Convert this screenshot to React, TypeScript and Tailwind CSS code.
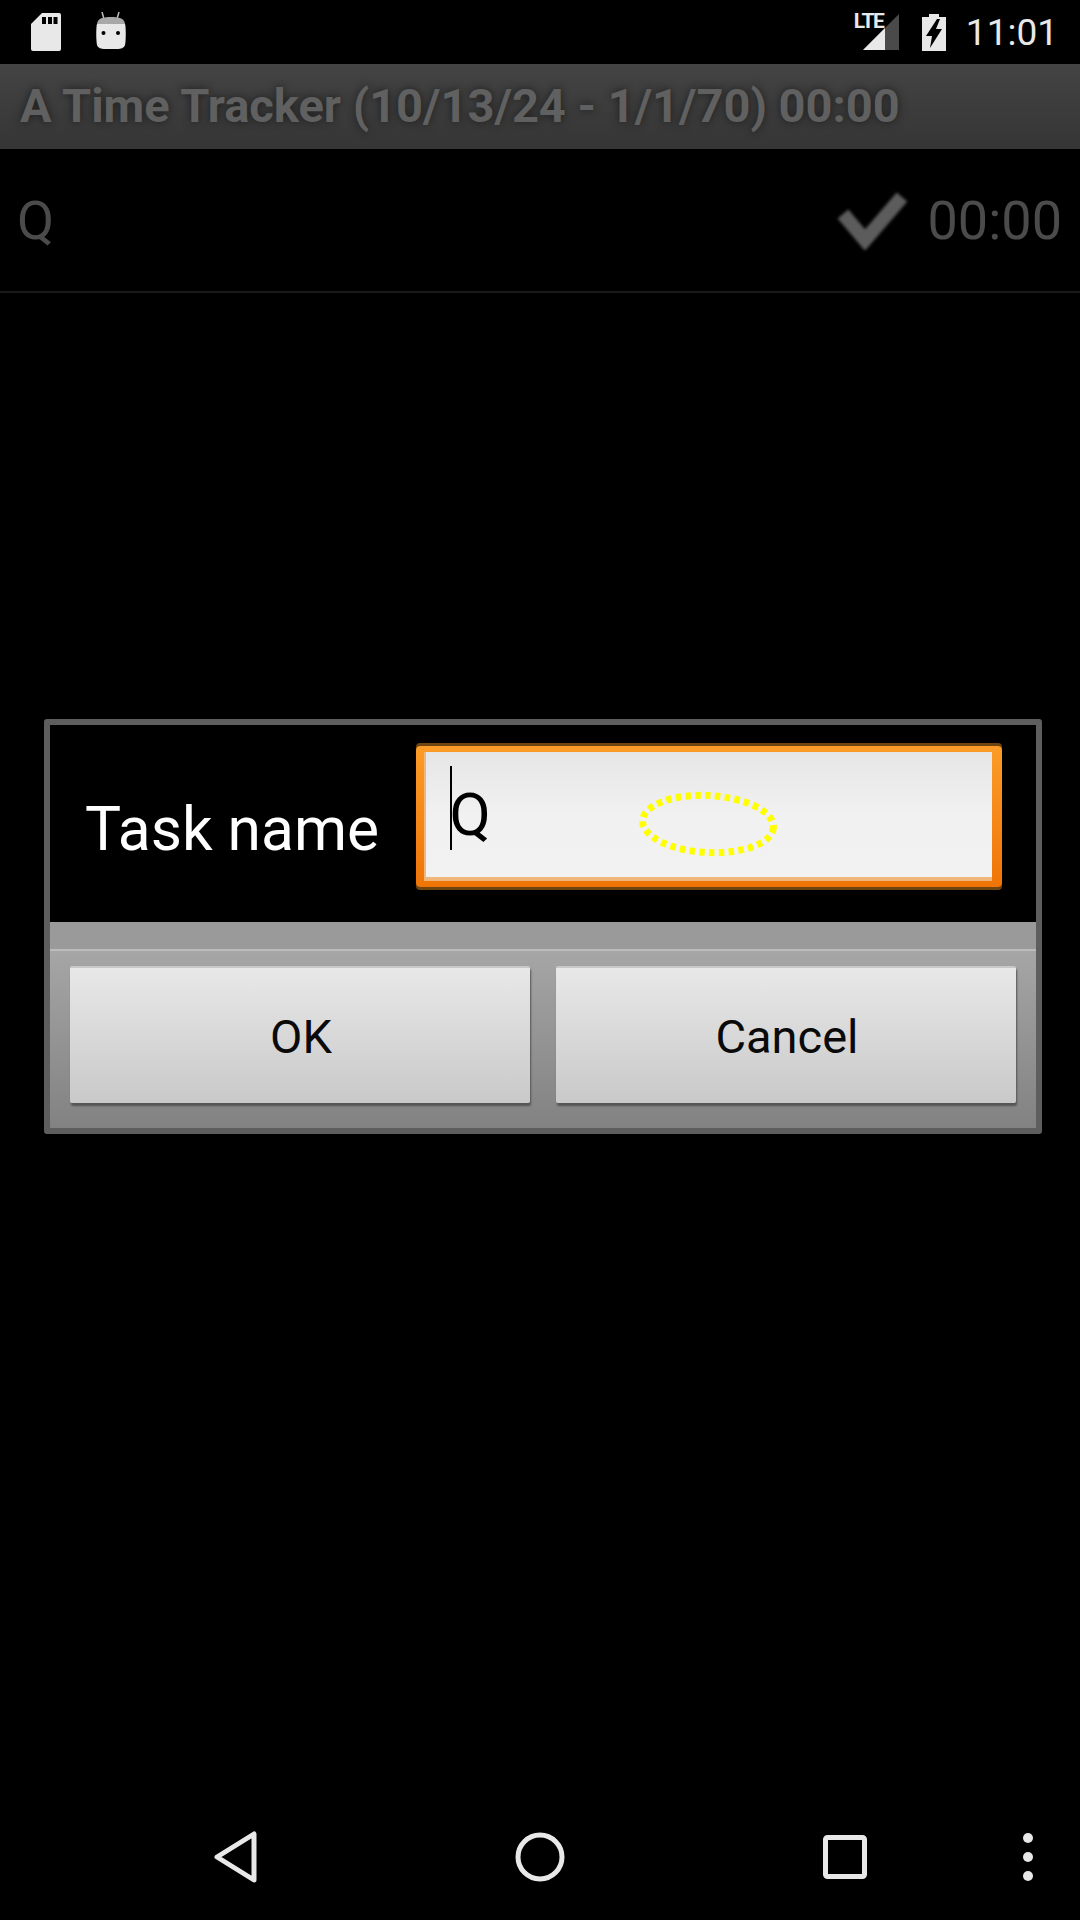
const roboto = "font-['Roboto','Liberation_Sans',sans-serif]";

function StatusBar() {
  return (
    <div className="h-16 flex items-center pl-[31px] pr-[22px] text-[#e8e8e8]">
      {/* sd card */}
      <svg width="30" height="38" viewBox="0 0 30 38" className="mb-[1px]">
        <path
          d="M11 0h17a2 2 0 0 1 2 2v34a2 2 0 0 1-2 2H2a2 2 0 0 1-2-2V11z"
          fill="#e8e8e8"
        />
        <path d="M11 4h4v7h-4zM17 4h4v7h-4zM22.500 4h4v7h-4z" fill="#000" />
      </svg>
      {/* android head */}
      <svg width="30" height="37" viewBox="0 0 30 37" className="ml-[35px] mb-[3px]">
        <path d="M6 0l2 7M23 0l-2 7" stroke="#bdbdbd" strokeWidth="1.500" />
        <path d="M6 6c5-1.500 13-1.500 18 0 3 1 5 3 5 7H1c0-4 2-6 5-7z" fill="#a8a8a8" />
        <path
          d="M1 12h28c1 2 1 17 0 21-1 3-4 4-8 4H9c-4 0-7-1-8-4-1-4-1-19 0-21z"
          fill="#e8e8e8"
        />
        <circle cx="7.500" cy="21" r="2" fill="#000" />
        <circle cx="22" cy="21" r="2" fill="#000" />
      </svg>
      <div className="ml-auto relative w-[45px] h-[37px] mt-[1px]">
        <svg width="36" height="36" viewBox="0 0 36 36" className="absolute left-[9px] top-0">
          <path d="M36 0v36H0z" fill="#4a4a4a" />
          <path d="M22 14v22H0z" fill="#e8e8e8" />
        </svg>
        <span
          className={`absolute left-0 -top-[5px] text-[21px] font-bold leading-[24px] tracking-[-1.5px] ${roboto}`}
        >
          LTE
        </span>
      </div>
      <svg width="24" height="37" viewBox="0 0 24 37" className="ml-[23px]">
        <path d="M7 0h10v3h7v34H0V3h7z" fill="#e8e8e8" />
        <path d="M15 5L4 22h6l-2 12 12-19h-6l4-10z" fill="#000" />
      </svg>
      <span className={`ml-[20px] text-[37px] leading-none text-[#e8e8e8] ${roboto}`}>11:01</span>
    </div>
  );
}

function TitleBar() {
  return (
    <div className="h-[85px] flex items-center pl-[20px] bg-gradient-to-b from-[#444444] to-[#353535]">
      <span
        className={`text-[47px] font-bold leading-none whitespace-nowrap mt-[-2px] text-[#606060] [text-shadow:0_0_8px_#1c1c1c] ${roboto}`}
      >
        A Time Tracker (10/13/24 - 1/1/70) 00:00
      </span>
    </div>
  );
}

function TaskRow() {
  return (
    <div className="h-[144px] flex items-center pl-[17px] pr-[18px] border-b-2 border-[#1a1a1a] text-[#4b4b4b]">
      <span className={`text-[54px] leading-none mt-[1px] ${roboto}`}>Q</span>
      <svg width="72" height="60" viewBox="0 0 72 60" className="ml-auto blur-[1.5px]">
        <path d="M7 24l22 26L66 7" fill="none" stroke="#5c5c5c" strokeWidth="14" />
      </svg>
      <span className={`ml-[20px] text-[54px] leading-none mt-[1px] ${roboto}`}>00:00</span>
    </div>
  );
}

function DialogButton({ label }: { label: string }) {
  return (
    <button
      className={`flex-1 h-[137px] flex items-center justify-center rounded-[2px] border-t-2 border-[#c8c8c8] bg-gradient-to-b from-[#e8e8e8] to-[#c9c9c9] text-[47px] text-[#0a0a0a] shadow-[1px_3px_2px_#555555] ${roboto}`}
    >
      <span className="mt-[4px] ml-[2px]">{label}</span>
    </button>
  );
}

function Dialog() {
  return (
    <div className="mt-[426px] ml-[44px] w-[998px] border-[6px] border-[#5e5e5e] rounded-[3px]">
      <div className="h-[197px] bg-black flex items-center pl-[35px]">
        <span className={`text-[60.500px] leading-none text-white mt-[14px] ${roboto}`}>Task name</span>
        <div className="relative ml-[37px] w-[586px] h-[141px] mt-[-14px] rounded-[4px] bg-gradient-to-b from-[#fb9c28] to-[#ef7405] shadow-[0_-3px_0_#6e4410,0_3px_0_#6e4410] pt-[6px] pb-[6px] pl-[8px] pr-[10px]">
          <div className="relative h-full bg-gradient-to-b from-[#e6e6e6] via-[#f1f1f1] to-[#f2f2f2] border-l-2 border-b-4 border-[#efb77c] flex items-center pl-[24px]">
            <span className="w-[1.500px] h-[84px] bg-black -mr-[2px] mt-[-14px]" />
            <span className={`text-[60px] leading-none text-black ${roboto}`}>Q</span>
          </div>
          {/* focus ring */}
          <svg
            width="140"
            height="66"
            viewBox="0 0 140 66"
            className="absolute left-[222px] top-[45px]"
          >
            <ellipse
              cx="70"
              cy="33"
              rx="65.500"
              ry="28.500"
              transform="rotate(3 70 33)"
              fill="none"
              stroke="#ffff00"
              strokeWidth="7"
              strokeDasharray="5.500 4.300"
            />
          </svg>
        </div>
      </div>
      <div className="h-[27px] bg-[#9a9a9a]" />
      <div className="border-t-2 border-[#bcbcbc] bg-gradient-to-b from-[#a6a6a6] to-[#828282] px-[20px] pt-[15px] pb-[25px] flex gap-[26px]">
        <DialogButton label="OK" />
        <DialogButton label="Cancel" />
      </div>
    </div>
  );
}

function NavBar() {
  return (
    <div className="mt-auto h-[120px] relative flex items-center">
      <svg width="44" height="52" viewBox="0 0 44 52" className="ml-[214px] mb-[6px]">
        <path
          d="M40 3v46L3 26z"
          fill="none"
          stroke="#e8e8e8"
          strokeWidth="5"
          strokeLinejoin="round"
        />
      </svg>
      <svg width="50" height="50" viewBox="0 0 50 50" className="ml-[257px] mb-[6px]">
        <circle cx="25" cy="25" r="22" fill="none" stroke="#e8e8e8" strokeWidth="5" />
      </svg>
      <svg width="44" height="44" viewBox="0 0 44 44" className="ml-[258px] mb-[6px]">
        <rect
          x="2.500"
          y="2.500"
          width="39"
          height="39"
          rx="2"
          fill="none"
          stroke="#e8e8e8"
          strokeWidth="5"
        />
      </svg>
      <svg width="12" height="50" viewBox="0 0 12 50" className="ml-[155px] mb-[6px]">
        <circle cx="6" cy="6" r="5" fill="#e8e8e8" />
        <circle cx="6" cy="25" r="5" fill="#e8e8e8" />
        <circle cx="6" cy="44" r="5" fill="#e8e8e8" />
      </svg>
    </div>
  );
}

export default function App() {
  return (
    <div className="w-[1080px] h-[1920px] bg-black flex flex-col overflow-hidden">
      <StatusBar />
      <TitleBar />
      <TaskRow />
      <Dialog />
      <NavBar />
    </div>
  );
}
